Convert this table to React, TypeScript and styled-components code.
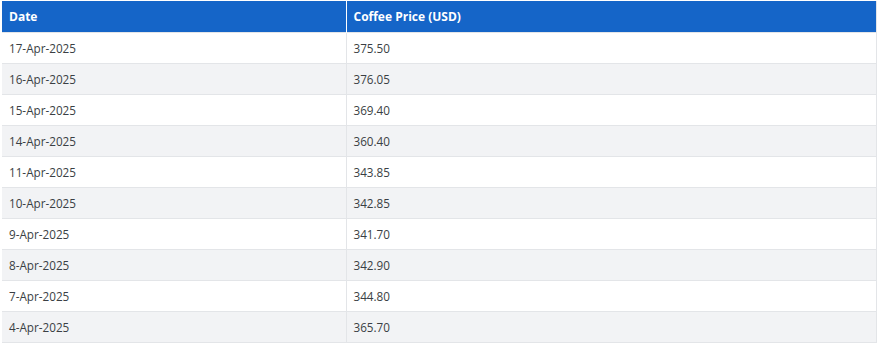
import React from "react";
import styled, { createGlobalStyle } from "styled-components";

const GlobalStyle = createGlobalStyle`
  body {
    margin: 0;
    font-family: "Open Sans", "Noto Sans", sans-serif;
    background: #fff;
  }
`;

const rows: [string, string][] = [
  ["17-Apr-2025", "375.50"],
  ["16-Apr-2025", "376.05"],
  ["15-Apr-2025", "369.40"],
  ["14-Apr-2025", "360.40"],
  ["11-Apr-2025", "343.85"],
  ["10-Apr-2025", "342.85"],
  ["9-Apr-2025", "341.70"],
  ["8-Apr-2025", "342.90"],
  ["7-Apr-2025", "344.80"],
  ["4-Apr-2025", "365.70"],
];

const App = () => {
  return (
    <Wrapper>
      <GlobalStyle />
      <Table>
        <thead>
          <tr>
            <HeadCell style={{ width: 344 }}>Date</HeadCell>
            <HeadCell>Coffee Price (USD)</HeadCell>
          </tr>
        </thead>
        <tbody>
          {rows.map(([date, price], i) => (
            <Row key={date} striped={i % 2 === 1}>
              <Cell>{date}</Cell>
              <Cell>{price}</Cell>
            </Row>
          ))}
        </tbody>
      </Table>
    </Wrapper>
  );
};

export default App;

const Wrapper = styled.div`
  padding: 1px 3px 0 2px;
`;

const Table = styled.table`
  width: 875px;
  border-collapse: collapse;
  border-right: 1px solid #e3e5e8;
  border-bottom: 1px solid #e3e5e8;
  font-size: 12px;
`;

const HeadCell = styled.th`
  height: 31px;
  padding: 0 7px;
  box-sizing: border-box;
  background: #1565c8;
  color: #fff;
  font-weight: 700;
  text-align: left;
  border-right: 1px solid #ffffff;
  &:last-child {
    border-right: none;
  }
`;

interface RowProps {
  striped: boolean;
}

const Row = styled.tr<RowProps>`
  background: ${({ striped }) => (striped ? "#f2f3f5" : "#ffffff")};
  border-top: 1px solid #e3e5e8;
`;

const Cell = styled.td`
  height: 31px;
  padding: 0 7px;
  box-sizing: border-box;
  color: #3a3f44;
  font-size: 11.7px;
  border-right: 1px solid #e3e5e8;
`;
